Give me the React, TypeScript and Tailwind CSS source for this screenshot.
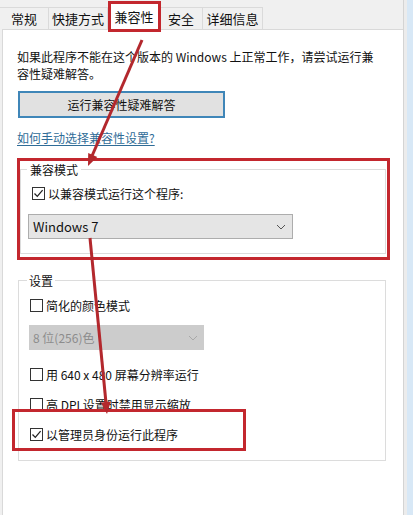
import React from "react";

const font = { fontFamily: '"Noto Sans CJK SC", "Microsoft YaHei", "Noto Sans", sans-serif' };

function Check({ on }: { on?: boolean }) {
  return (
    <span className="flex h-[13px] w-[13px] shrink-0 items-center justify-center border border-[#333] bg-white">
      {on && (
        <svg width="11" height="11" viewBox="0 0 11 11">
          <path d="M1.5 5.5 L4.3 8.4 L9.6 2.2" fill="none" stroke="#222" strokeWidth="1.3" />
        </svg>
      )}
    </span>
  );
}

function Row({ on, label, className = "" }: { on?: boolean; label: string; className?: string }) {
  return (
    <div className={`flex h-[17px] items-center gap-[3px] pl-[11px] ${className}`}>
      <Check on={on} />
      <span>{label}</span>
    </div>
  );
}

function Chevron({ color }: { color: string }) {
  return (
    <svg width="10" height="6" viewBox="0 0 10 6" className="mr-[6px]">
      <path d="M1 1 L5 5 L9 1" fill="none" stroke={color} strokeWidth="1" />
    </svg>
  );
}

const tabs = [
  { t: "常规", w: 49 },
  { t: "快捷方式", w: 59 },
  { t: "兼容性", w: 52, on: true },
  { t: "安全", w: 43 },
  { t: "详细信息", w: 60 },
];

export default function App() {
  return (
    <div className="relative flex h-[515px] w-[413px] overflow-hidden bg-[#f0f0f0] text-[12px] leading-[17px] text-[#111]" style={font}>
      <div className="flex w-[403px] flex-col">
        {/* tabs */}
        <div className="flex h-[29px] items-end pl-0">
          {tabs.map((tb) => (
            <div
              key={tb.t}
              style={{ width: tb.w }}
              className={
                tb.on
                  ? "-mb-px flex h-[28px] items-center justify-center border-x border-t border-[#d9d9d9] bg-white"
                  : "flex h-[22px] items-center justify-center border-r border-t border-[#dadada] bg-[#f0f0f0] text-[13px]"
              }
            >
              <span className={tb.on ? "text-[13px]" : ""}>{tb.t}</span>
            </div>
          ))}
        </div>

        {/* panel */}
        <div className="ml-[2px] flex flex-1 flex-col border-l border-t border-[#d9d9d9] bg-white pl-[14px] pt-[18px]">
          <p>如果此程序不能在这个版本的 Windows 上正常工作，请尝试运行兼</p>
          <p>容性疑难解答。</p>

          <button className="ml-px mt-[9px] h-[27px] w-[207px] border-2 border-[#3f86b8] bg-[#e1e1e1] text-[12px] text-[#111]">
            运行兼容性疑难解答
          </button>

          <a className="mt-[11px] w-fit text-[#2f6c97] underline underline-offset-2">如何手动选择兼容性设置?</a>

          {/* group 1 */}
          <div className="relative ml-[3px] mt-[23px] h-[85px] w-[366px] border border-[#dcdcdc]">
            <span className="absolute -top-[9px] left-[6px] bg-white px-[3px]">兼容模式</span>
            <Row on label="以兼容模式运行这个程序:" className="mt-[15px] pl-[7px]" />
            <div className="ml-[7px] mt-[12px] flex h-[25px] w-[265px] items-center justify-between border border-[#adadad] bg-[#e5e5e5] pl-[4px] text-[13px]">
              <span>Windows 7</span>
              <Chevron color="#555" />
            </div>
          </div>

          {/* group 2 */}
          <div className="relative ml-[1px] mt-[26px] h-[181px] w-[368px] border border-[#dcdcdc] text-[#111]">
            <span className="absolute -top-[9px] left-[8px] bg-white px-[2px]">设置</span>
            <Row label="简化的颜色模式" className="mt-[16px] pl-[10px]" />
            <div className="ml-[10px] mt-[11px] flex h-[25px] w-[175px] items-center justify-between bg-[#cccccc] pl-[4px] text-[#8c8c8c]">
              <span>8 位(256)色</span>
              <Chevron color="#a8a8a8" />
            </div>
            <Row label="用 640 x 480 屏幕分辨率运行" className="mt-[16px] pl-[10px]" />
            <Row label="高 DPI 设置时禁用显示缩放" className="mt-[13px] pl-[10px]" />
            <Row on label="以管理员身份运行此程序" className="mt-[13px] pl-[10px]" />
          </div>
        </div>
      </div>

      {/* window edge */}
      <div className="w-px bg-[#d4d4d4]" />
      <div className="w-[3px] bg-[#ececec]" />
      <div className="flex-1 bg-[#d8e8f6]" />

      {/* annotations */}
      <div className="pointer-events-none absolute left-[108px] top-[1px] h-[31px] w-[53px] border-[3px] border-[#c3272e]" />
      <div className="pointer-events-none absolute left-[17px] top-[158px] h-[102px] w-[373px] border-[3px] border-[#c3272e]" />
      <div className="pointer-events-none absolute left-[12px] top-[409px] h-[42px] w-[234px] border-[3px] border-[#c3272e]" />
      <svg className="pointer-events-none absolute inset-0" width="413" height="515">
        <line x1="142" y1="40" x2="92" y2="156" stroke="#b3282d" strokeWidth="3" />
        <polygon points="88,166 97.3,157 88.2,153" fill="#b3282d" />
        <line x1="90" y1="238" x2="106" y2="403" stroke="#b3282d" strokeWidth="3" />
        <polygon points="107,414 110.8,401.5 100.9,402.5" fill="#b3282d" />
      </svg>
    </div>
  );
}
